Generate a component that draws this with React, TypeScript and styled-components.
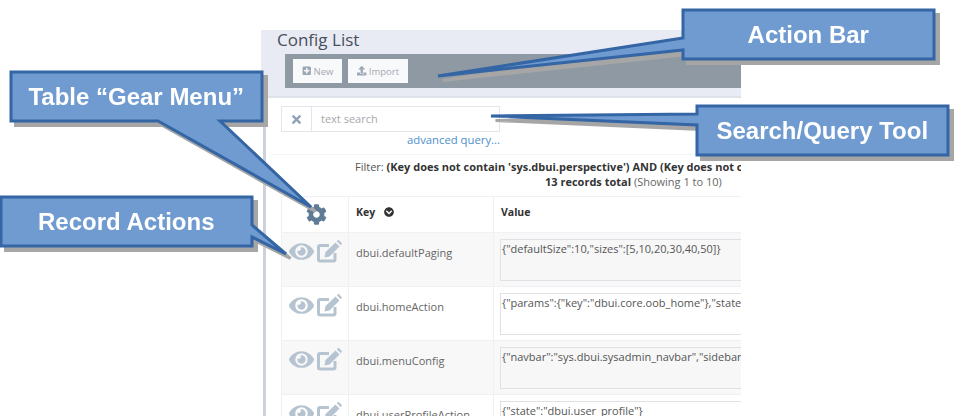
import React from 'react'
import styled, { createGlobalStyle } from 'styled-components'
import { FaCog, FaEye, FaChevronCircleDown, FaPlusSquare, FaUpload, FaTimes } from 'react-icons/fa'

const GlobalStyle = createGlobalStyle`
  html, body {
    margin: 0;
    padding: 0;
    background: #fff;
  }
`

const rows = [
  { key: 'dbui.defaultPaging', value: '{"defaultSize":10,"sizes":[5,10,20,30,40,50]}' },
  { key: 'dbui.homeAction', value: '{"params":{"key":"dbui.core.oob_home"},"state":"dbui.view"}' },
  { key: 'dbui.menuConfig', value: '{"navbar":"sys.dbui.sysadmin_navbar","sidebar":"sys.dbui.sidebar"}' },
  { key: 'dbui.userProfileAction', value: '{"state":"dbui.user_profile"}' },
]

// outline of each callout box with its pointer
const callouts = [
  { label: 'Table “Gear Menu”', x: 11, y: 72, path: 'M11 72 H262 V121 H220 L311 207 L158 121 H11 Z' },
  { label: 'Record Actions', x: 1, y: 197, path: 'M1 197 H252 V225 L286 254 L252 237 V246 H1 Z' },
  { label: 'Action Bar', x: 683, y: 10, path: 'M683 10 H934 V59 H683 V50 L438 76 L683 38 Z' },
  { label: 'Search/Query Tool', x: 697, y: 106, path: 'M697 106 H948 V155 H697 V125 L491 116 L697 114 Z' },
]

const EditIcon = () => (
  <svg width="25" height="24" viewBox="0 0 25 24" fill="currentColor">
    <path d="M12 6.5H3a1.5 1.5 0 0 0-1.5 1.5V20.5A1.5 1.5 0 0 0 3 22H16.5a1.5 1.5 0 0 0 1.5-1.5V14" fill="none" stroke="currentColor" strokeWidth="3" />
    <path d="M7.5 18.5L8.5 13L18.5 3.5L22.5 7.5L12.5 17.5Z" />
    <path d="M19.8 2.2L21.5.8L25 4.3L23.8 6.2Z" />
  </svg>
)

export default function App() {
  return (
    <S.Page>
      <GlobalStyle />
      <S.Panel>
        <S.Header>
          <S.Title>Config List</S.Title>
          <S.ActionBar>
            <S.ActionButton><FaPlusSquare /> New</S.ActionButton>
            <S.ActionButton><FaUpload /> Import</S.ActionButton>
          </S.ActionBar>
        </S.Header>
        <S.Body>
          <S.SearchArea>
            <S.SearchBox>
              <S.ClearCell><FaTimes /></S.ClearCell>
              <S.SearchInput>text search</S.SearchInput>
            </S.SearchBox>
            <S.AdvancedLink>advanced query...</S.AdvancedLink>
          </S.SearchArea>
          <S.FilterArea>
            <S.FilterLine>
              Filter: <b>(Key does not contain 'sys.dbui.perspective') AND (Key does not contain 'sys.dbui.other')</b>
            </S.FilterLine>
            <S.TotalLine><b>13 records total</b> (Showing 1 to 10)</S.TotalLine>
          </S.FilterArea>
          <S.Table>
            <S.HeaderRow>
              <S.GearCell><FaCog /></S.GearCell>
              <S.KeyHead>Key <FaChevronCircleDown /></S.KeyHead>
              <S.ValueHead>Value</S.ValueHead>
            </S.HeaderRow>
            {rows.map((row, i) => (
              <S.Row key={row.key} $shaded={i % 2 === 0}>
                <S.ActionsCell>
                  <FaEye />
                  <EditIcon />
                </S.ActionsCell>
                <S.KeyCell>{row.key}</S.KeyCell>
                <S.ValueCell>
                  <S.ValueBox $shaded={i % 2 === 0}>{row.value}</S.ValueBox>
                </S.ValueCell>
              </S.Row>
            ))}
          </S.Table>
        </S.Body>
      </S.Panel>

      <S.CalloutLayer width="964" height="416" viewBox="0 0 964 416">
        {callouts.map(c => (
          <g key={c.label}>
            <S.CalloutShadow d={c.path} transform="translate(4.5 4.5)" />
            <S.CalloutShape d={c.path} />
          </g>
        ))}
      </S.CalloutLayer>
      {callouts.map(c => (
        <S.CalloutLabel key={c.label} $x={c.x} $y={c.y}>{c.label}</S.CalloutLabel>
      ))}
    </S.Page>
  )
}

const S = {
  Page: styled.div`
    position: relative;
    width: 964px;
    height: 416px;
    overflow: hidden;
    padding: 30px 0 0 261px;
    box-sizing: border-box;
    font-family: 'Open Sans', sans-serif;
    filter: blur(0.3px);
  `,
  Panel: styled.div`
    width: 480px;
    height: 386px;
    overflow: hidden;
    background: #fff;
  `,
  Header: styled.div`
    height: 68px;
    box-sizing: border-box;
    background: #e8ebf3;
    border-bottom: 2px solid #dfe2e9;
    padding-left: 16px;
  `,
  Title: styled.div`
    font-size: 17px;
    line-height: 20px;
    color: #4a4f5c;
  `,
  ActionBar: styled.div`
    display: flex;
    gap: 6px;
    height: 34px;
    margin: 4px 0 0 8px;
    padding: 5px 8px;
    box-sizing: border-box;
    background: #8e99a3;
  `,
  ActionButton: styled.div`
    display: flex;
    align-items: center;
    justify-content: center;
    gap: 2px;
    padding: 0 9px;
    height: 24px;
    background: #f8f9fb;
    color: #a3a9b1;
    font-size: 9.5px;
    svg {
      color: #9aa7b5;
      font-size: 9.5px;
    }
  `,
  Body: styled.div`
    margin-left: 2px;
    border-left: 3px solid #cdd1dc;
    padding-left: 5px;
  `,
  SearchArea: styled.div`
    padding: 8px 0 0 10px;
    height: 57px;
    box-sizing: border-box;
    border-bottom: 1px solid #f2f3f6;
  `,
  SearchBox: styled.div`
    display: flex;
    width: 219px;
    height: 26px;
    box-sizing: border-box;
    border: 1px solid #e3e5ea;
  `,
  ClearCell: styled.div`
    display: flex;
    align-items: center;
    justify-content: center;
    width: 29px;
    border-right: 1px solid #e3e5ea;
    color: #8fa3b8;
    font-size: 13px;
  `,
  SearchInput: styled.div`
    padding-left: 9px;
    line-height: 24px;
    color: #a5a8ad;
    font-size: 11px;
  `,
  AdvancedLink: styled.div`
    width: 219px;
    margin-top: 1px;
    text-align: right;
    color: #4d8fcb;
    font-size: 11.3px;
    line-height: 14px;
  `,
  FilterArea: styled.div`
    height: 41px;
    padding: 4px 0 0 10px;
    box-sizing: border-box;
  `,
  FilterLine: styled.div`
    white-space: nowrap;
    margin-left: 74px;
    font-size: 11px;
    line-height: 15px;
    color: #555;
    b {
      color: #333;
    }
  `,
  TotalLine: styled.div`
    white-space: nowrap;
    margin-left: 264px;
    font-size: 11px;
    line-height: 15px;
    color: #666;
    b {
      color: #333;
    }
  `,
  Table: styled.div`
    margin-left: 10px;
    width: 480px;
    border-top: 1px solid #f0f1f5;
  `,
  HeaderRow: styled.div`
    display: grid;
    grid-template-columns: 68px 145px 1fr;
    height: 35px;
    border-bottom: 1px solid #f0f1f5;
    font-size: 10.5px;
    font-weight: 700;
    color: #333;
  `,
  GearCell: styled.div`
    display: flex;
    align-items: center;
    justify-content: center;
    padding-left: 2px;
    border-left: 1px solid #eef0f4;
    border-right: 1px solid #eef0f4;
    color: #5f7b96;
    font-size: 21px;
  `,
  KeyHead: styled.div`
    display: flex;
    align-items: center;
    gap: 9px;
    padding: 0 0 5px 7px;
    border-right: 1px solid #eef0f4;
    svg {
      font-size: 10px;
    }
  `,
  ValueHead: styled.div`
    display: flex;
    align-items: center;
    padding: 0 0 5px 7px;
  `,
  Row: styled.div<{ $shaded: boolean }>`
    display: grid;
    grid-template-columns: 68px 145px 1fr;
    height: 54px;
    box-sizing: border-box;
    border-bottom: 1px solid #eef0f4;
    background: ${p => (p.$shaded ? '#f8f8f9' : '#fff')};
  `,
  ActionsCell: styled.div`
    display: flex;
    align-items: flex-start;
    justify-content: center;
    gap: 3px;
    padding-top: 6px;
    border-left: 1px solid #eef0f4;
    border-right: 1px solid #eef0f4;
    color: #b6c3d0;
    font-size: 25px;
  `,
  KeyCell: styled.div`
    padding: 11px 0 0 7px;
    border-right: 1px solid #eef0f4;
    font-size: 11px;
    line-height: 17px;
    color: #666;
  `,
  ValueCell: styled.div`
    padding: 6px 0 0 6px;
  `,
  ValueBox: styled.div<{ $shaded: boolean }>`
    width: 300px;
    height: 42px;
    box-sizing: border-box;
    padding: 2px 1px;
    white-space: nowrap;
    overflow: hidden;
    border: 1px solid #dfe1e5;
    background: ${p => (p.$shaded ? '#f7f7f7' : '#fff')};
    font-size: 11px;
    line-height: 14px;
    color: #555;
  `,
  CalloutLayer: styled.svg`
    position: absolute;
    left: 0;
    top: 0;
    pointer-events: none;
  `,
  CalloutShadow: styled.path`
    fill: #a6a6a6;
    stroke: #a6a6a6;
    stroke-width: 3;
  `,
  CalloutShape: styled.path`
    fill: #6f9bd1;
    stroke: #3465a4;
    stroke-width: 3;
  `,
  CalloutLabel: styled.div<{ $x: number; $y: number }>`
    position: absolute;
    left: ${p => p.$x}px;
    top: ${p => p.$y}px;
    width: 250.5px;
    height: 49px;
    line-height: 49px;
    text-align: center;
    color: #fff;
    font-family: 'Liberation Sans', Arial, sans-serif;
    font-weight: 700;
    font-size: 24px;
    white-space: nowrap;
  `,
}
